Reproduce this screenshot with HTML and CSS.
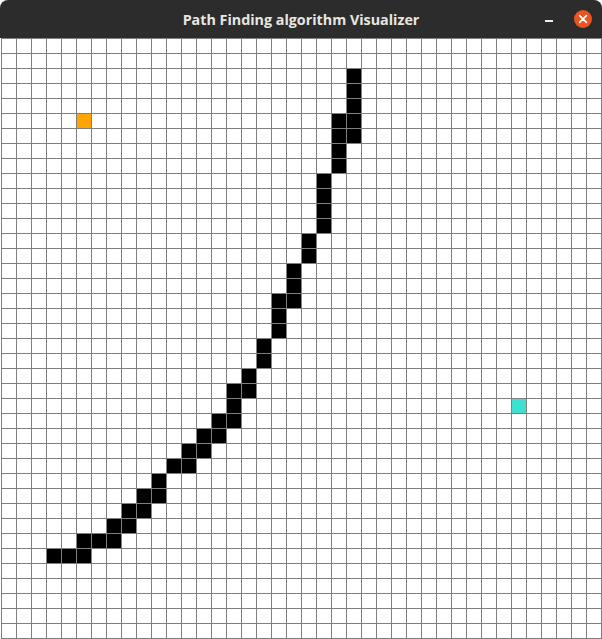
FILE: index.html
```html
<!DOCTYPE html>
<html lang="en">
<head>
<meta charset="utf-8">
<title>Path Finding algorithm Visualizer</title>
<link rel="stylesheet" href="styles.css">
</head>
<body>
<div class="window">
  <header class="titlebar">
    <span class="spacer"></span>
    <span class="title">Path Finding algorithm Visualizer</span>
    <div class="controls">
      <span class="min"></span>
      <span class="close">
        <svg width="18" height="18" viewBox="0 0 18 18"><circle cx="9" cy="9" r="9" fill="#e95420"/><path d="M5.6 5.6 L12.4 12.4 M12.4 5.6 L5.6 12.4" stroke="#fff" stroke-width="1.6" stroke-linecap="round"/></svg>
      </span>
    </div>
  </header>
  <div class="grid" id="grid"></div>
</div>
<script src="script.js"></script>
</body>
</html>
```

FILE: styles.css
```css
html, body {
  margin: 0;
  padding: 0;
  background: #ffffff;
}
.window {
  width: 602px;
  height: 639px;
  overflow: hidden;
}
.titlebar {
  height: 38px;
  background: #2c2c2c;
  border-radius: 8px 8px 0 0;
  display: grid;
  grid-template-columns: 1fr auto 1fr;
  align-items: center;
  box-sizing: border-box;
}
.title {
  font-family: "Open Sans", "DejaVu Sans", sans-serif;
  font-weight: 700;
  font-size: 14.3px;
  color: #e8e6e1;
  letter-spacing: 0;
  padding-top: 1px;
}
.controls {
  justify-self: end;
  display: flex;
  align-items: center;
  gap: 21px;
  padding-right: 10px;
}
.min {
  width: 8px;
  height: 1.5px;
  background: #f0f0f0;
  margin-top: 4px;
}
.close {
  width: 18px;
  height: 18px;
  display: block;
}
.close svg { display: block; }
.grid {
  margin-left: 1px;
  width: fit-content;
  display: grid;
  grid-template-columns: repeat(40, 14px);
  grid-auto-rows: 14px;
  gap: 1px;
  padding: 1px;
  background: #7f7f7f;
}
.cell { background: #ffffff; }
.cell.wall { background: #000000; }
.cell.start { background: #ffa500; }
.cell.end { background: #40e0d0; }
```

FILE: script.js
```js
const walls = {2:[23],3:[23],4:[23],5:[22,23],6:[22,23],7:[22],8:[22],9:[21],10:[21],11:[21],12:[21],13:[20],14:[20],15:[19],16:[19],17:[18,19],18:[18],19:[18],20:[17],21:[17],22:[16],23:[15,16],24:[15],25:[14,15],26:[13,14],27:[12,13],28:[11,12],29:[10],30:[9,10],31:[8,9],32:[7,8],33:[5,6,7],34:[3,4,5]};
const grid = document.getElementById('grid');
const frag = document.createDocumentFragment();
for (let r = 0; r < 40; r++) {
  for (let c = 0; c < 40; c++) {
    const d = document.createElement('div');
    d.className = 'cell';
    if (walls[r] && walls[r].includes(c)) d.classList.add('wall');
    if (r === 5 && c === 5) d.classList.add('start');
    if (r === 24 && c === 34) d.classList.add('end');
    frag.appendChild(d);
  }
}
grid.appendChild(frag);
```
